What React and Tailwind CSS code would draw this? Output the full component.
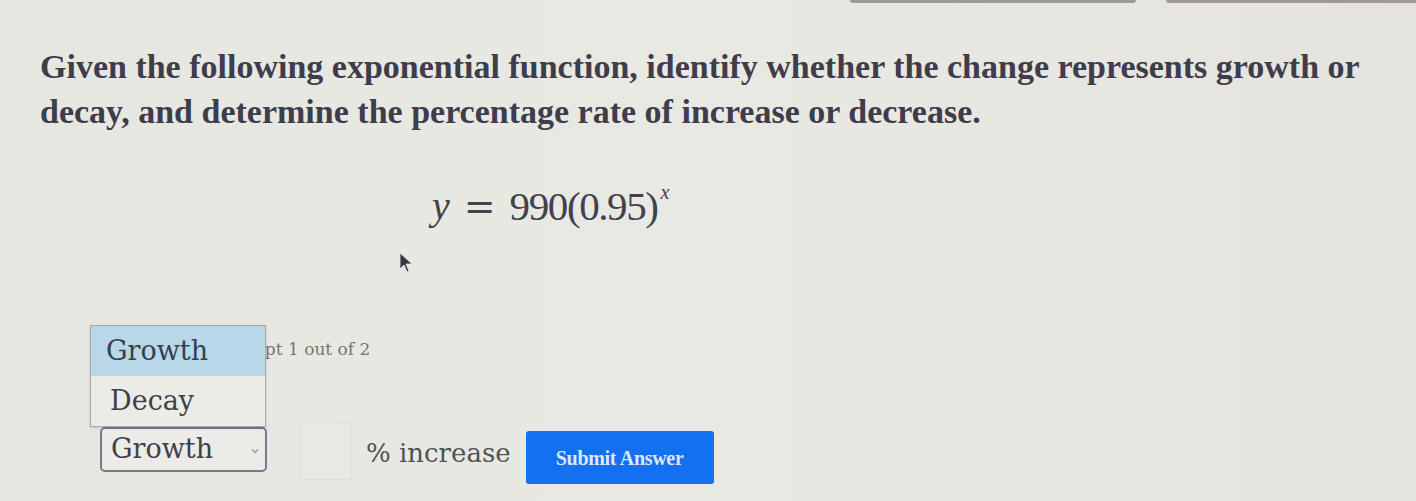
import React from "react";

export default function App() {
  return (
    <div className="relative w-[1416px] h-[501px] overflow-hidden bg-gradient-to-r from-[#e7e7e2] via-[#e9e9e3] to-[#e5e3dd]">
      {/* top tab edges */}
      <div className="flex h-[4px] gap-[30px] pl-[850px]">
        <div className="w-[286px] h-[3px] rounded-b bg-[#9a9c94]" />
        <div className="flex-1 h-[3px] rounded-bl bg-[#a09a94]" />
      </div>

      <div className="pl-[40px] pr-[20px] pt-[40px]">
        <p
          className="text-[34px] leading-[45px] font-bold text-[#3f3c4c] tracking-[0px] whitespace-nowrap"
          style={{ fontFamily: '"Liberation Serif", serif' }}
        >
          Given the following exponential function, identify whether the change represents growth or
          <br />
          decay, and determine the percentage rate of increase or decrease.
        </p>

        <div className="mt-[48px] ml-[392px] flex items-start text-[#42424c]">
          <span className="text-[40px] leading-[48px] italic" style={{ fontFamily: '"Liberation Serif", serif' }}>y</span>
          <span className="text-[38px] leading-[48px] mx-[14px]" style={{ fontFamily: '"DejaVu Sans", sans-serif' }}>=</span>
          <span className="text-[41px] leading-[48px] tracking-[-1.4px]" style={{ fontFamily: '"Liberation Serif", serif' }}>990(0.95)</span>
          <span className="text-[20px] leading-[20px] italic mt-[0px] ml-[3px]" style={{ fontFamily: '"Liberation Serif", serif' }}>x</span>
        </div>

        {/* attempt line */}
        <div className="mt-[108px] pl-[173px] text-[17px] leading-[22px] text-[#747474]" style={{ fontFamily: '"DejaVu Serif", serif' }}>
          Attempt 1 out of 2
        </div>

        {/* answer row */}
        <div className="mt-[62px] ml-[60px] flex items-start" style={{ fontFamily: '"DejaVu Serif", serif' }}>
          <div className="relative mt-[5px]">
            {/* open listbox */}
            <div className="absolute left-[-10px] bottom-[45px] w-[176px] border border-[#a8a8b0] bg-[#ecece7] shadow-sm">
              <div className="h-[50px] bg-[#b8d8e8] flex items-center pl-[15px] text-[27px] text-[#344050]">Growth</div>
              <div className="h-[50px] flex items-center pl-[19px] text-[27px] text-[#404048]">Decay</div>
            </div>
            <div className="w-[167px] h-[45px] rounded-[5px] border-2 border-[#7a7890] bg-[#ecebe8] flex items-center pl-[9px] pr-[4px] justify-between">
              <span className="text-[27px] text-[#404048]">Growth</span>
              <svg width="12" height="12" viewBox="0 0 12 12" className="mt-[2px]">
                <path d="M3 4.5 L6 7.5 L9 4.5" fill="none" stroke="#9a9aa8" strokeWidth="1.3" />
              </svg>
            </div>
          </div>
          <div className="ml-[33px] w-[52px] h-[58px] border border-[#dededa] bg-[#e9e9e4]" />
          <span className="ml-[14px] mt-[16px] text-[26px] leading-[30px] text-[#525252]">% increase</span>
          <button className="ml-[15px] mt-[9px] w-[188px] h-[53px] rounded-[3px] bg-[#1370f0] text-[#dfe6f5] text-[20px] font-bold tracking-[-0.3px]" style={{ fontFamily: '"Liberation Serif", serif' }}>
            Submit Answer
          </button>
        </div>
      </div>

      {/* mouse cursor */}
      <svg className="absolute left-[399px] top-[252px]" width="16" height="22" viewBox="0 0 16 22">
        <path d="M1 1 L1 17 L5 13 L8 20 L10 19 L7 12 L13 12 Z" fill="#3a3444" stroke="#e8e8e4" strokeWidth="0.8" />
      </svg>
    </div>
  );
}
